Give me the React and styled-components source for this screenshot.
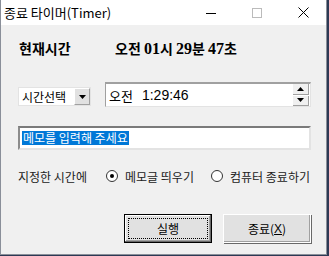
import React from "react";
import styled, { createGlobalStyle } from "styled-components";

const Global = createGlobalStyle`
  html, body { margin: 0; padding: 0; background: #2d3954; }
  body { font-family: "Noto Sans CJK KR", "Noto Sans", sans-serif; }
  * { box-sizing: border-box; }
`;

const Window = styled.div`
  width: 327px;
  height: 255px;
  border: 1px solid #8a8f99;
  border-top: none;
  background: #f0f0f0;
  display: flex;
  flex-direction: column;
`;

const TitleBar = styled.div`
  height: 25px;
  background: #fff;
  display: flex;
  align-items: center;
  padding-left: 3px;
  font-size: 13px;
  color: #000;
  span { flex: 1; line-height: 25px; }
`;

const CapBtn = styled.div`
  width: 46px;
  height: 25px;
  display: flex;
  align-items: center;
  justify-content: center;
`;

const Body = styled.div`
  padding: 0 15px 0 17px;
  display: flex;
  flex-direction: column;
`;

const Row = styled.div`
  display: flex;
  align-items: ${(p) => p.$align || "center"};
  margin-top: ${(p) => p.$mt}px;
  height: ${(p) => p.$h}px;
`;

const Clock = styled.div`
  font-size: 14px;
  font-weight: 700;
  color: #000;
  line-height: 16px;
  width: ${(p) => p.$w || "auto"};
  padding-left: 1px;
  b { font-family: "Liberation Serif", serif; font-size: 16px; }
`;

const Select = styled.div`
  margin-top: 5px;
  width: 73px;
  height: 19px;
  background: #fff;
  border: 1px solid #e3e3e3;
  display: flex;
  align-items: center;
  justify-content: space-between;
  font-size: 12px;
  padding-left: 3px;
  color: #000;
`;

const DropBtn = styled.div`
  width: 16px;
  height: 17px;
  background: #e1e1e1;
  border-right: 1px solid #a0a0a0;
  border-bottom: 1px solid #a0a0a0;
  border-top: 1px solid #fff;
  border-left: 1px solid #fff;
  display: flex;
  align-items: center;
  justify-content: center;
`;

const TimeBox = styled.div`
  margin-left: 14px;
  width: 206px;
  height: 25px;
  background: #fff;
  border-top: 2px solid #a0a0a0;
  border-left: 1px solid #a0a0a0;
  border-right: 1px solid #e3e3e3;
  border-bottom: 1px solid #e3e3e3;
  display: flex;
  align-items: center;
  font-size: 13px;
  padding-left: 3px;
  color: #000;
  span.v { margin-left: 9px; font-family: "Liberation Sans", sans-serif; font-size: 14px; flex: 1; }
`;

const Spin = styled.div`
  width: 16px;
  height: 100%;
  display: flex;
  flex-direction: column;
  gap: 1px;
  margin-right: 1px;
`;

const SpinBtn = styled.div`
  flex: 1;
  background: #f0f0f0;
  border-right: 1px solid #a0a0a0;
  border-bottom: 1px solid #a0a0a0;
  display: flex;
  align-items: center;
  justify-content: center;
`;

const Memo = styled.div`
  width: 296px;
  height: 24px;
  background: #fff;
  border-top: 2px solid #7a7a7a;
  border-left: 2px solid #8c8c8c;
  border-right: 2px solid #e3e3e3;
  border-bottom: 2px solid #e3e3e3;
  display: flex;
  align-items: center;
  padding-left: 2px;
`;

const Sel = styled.span`
  background: #0078d7;
  color: #fff;
  font-size: 12px;
  line-height: 14px;
  height: 14px;
  padding: 0 1px;
`;

const Label = styled.span`
  font-size: 12px;
  color: #222;
  width: ${(p) => p.$w || "auto"};
`;

const Radio = styled.span`
  width: 12px;
  height: 12px;
  border-radius: 50%;
  border: 1px solid #333;
  background: #fff;
  display: inline-flex;
  align-items: center;
  justify-content: center;
  margin-right: 7px;
  &::after {
    content: "";
    width: 4px;
    height: 4px;
    border-radius: 50%;
    background: ${(p) => (p.$on ? "#000" : "transparent")};
  }
`;

const Option = styled.div`
  display: flex;
  align-items: center;
  width: ${(p) => p.$w};
`;

const Buttons = styled.div`
  display: flex;
  justify-content: flex-end;
  gap: 11px;
  margin-top: 30px;
`;

const Button = styled.div`
  width: ${(p) => p.$w}px;
  height: 29px;
  background: #e1e1e1;
  border: 1px solid ${(p) => (p.$def ? "#000" : "#fff")};
  box-shadow: ${(p) =>
    p.$def
      ? "inset -1px -1px 0 #696969, inset 1px 1px 0 #fff, inset -2px -2px 0 #a0a0a0"
      : "1px 1px 0 #696969, inset -1px -1px 0 #a0a0a0"};
  display: flex;
  align-items: center;
  justify-content: center;
  font-size: 12px;
  color: #000;
  position: relative;
  &::after {
    content: "";
    display: ${(p) => (p.$def ? "block" : "none")};
    position: absolute;
    inset: 3px;
    border: 1px dotted #000;
  }
  u { font-family: "Liberation Sans", sans-serif; }
`;

const Tri = ({ up }) => (
  <svg width="7" height="4" viewBox="0 0 7 4">
    <path d={up ? "M3.5 0 L7 4 L0 4 Z" : "M0 0 L7 0 L3.5 4 Z"} fill="#000" />
  </svg>
);

export default function App() {
  return (
    <>
      <Global />
      <Window>
        <TitleBar>
          <span>종료 타이머(Timer)</span>
          <CapBtn>
            <svg width="10" height="10"><path d="M0 5.5 H10" stroke="#000" /></svg>
          </CapBtn>
          <CapBtn>
            <svg width="10" height="10"><rect x="0.5" y="0.5" width="9" height="9" fill="none" stroke="#bbb" /></svg>
          </CapBtn>
          <CapBtn>
            <svg width="11" height="11"><path d="M0.5 0.5 L10.5 10.5 M10.5 0.5 L0.5 10.5" stroke="#000" /></svg>
          </CapBtn>
        </TitleBar>
        <Body>
          <Row $mt={15} $h={16}>
            <Clock $w="96px">현재시간</Clock>
            <Clock>
              오전 <b>01</b>시 <b>29</b>분 <b>47</b>초
            </Clock>
          </Row>
          <Row $mt={26} $h={25} $align="flex-start">
            <Select>
              시간선택
              <DropBtn>
                <Tri />
              </DropBtn>
            </Select>
            <TimeBox>
              오전<span className="v">1:29:46</span>
              <Spin>
                <SpinBtn><Tri up /></SpinBtn>
                <SpinBtn><Tri /></SpinBtn>
              </Spin>
            </TimeBox>
          </Row>
          <Row $mt={19} $h={24}>
            <Memo>
              <Sel>메모를 입력해 주세요</Sel>
            </Memo>
          </Row>
          <Row $mt={18} $h={16}>
            <Label $w="88px">지정한 시간에</Label>
            <Option $w="105px">
              <Radio $on />
              <Label>메모글 띄우기</Label>
            </Option>
            <Option>
              <Radio />
              <Label>컴퓨터 종료하기</Label>
            </Option>
          </Row>
          <Buttons>
            <Button $w={88} $def>실행</Button>
            <Button $w={88}>
              종료(<u>X</u>)
            </Button>
          </Buttons>
        </Body>
      </Window>
    </>
  );
}
